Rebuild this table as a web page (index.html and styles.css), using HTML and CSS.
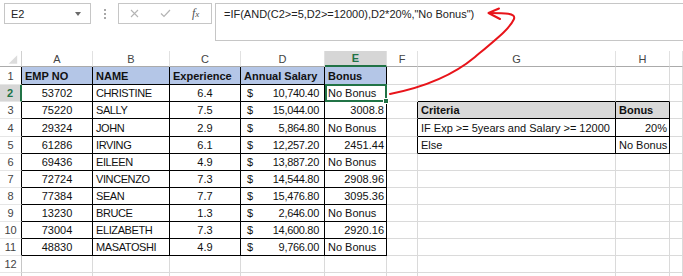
FILE: index.html
```html
<!DOCTYPE html>
<html>
<head>
<meta charset="utf-8">
<link rel="stylesheet" href="styles.css">
</head>
<body>
<div class="bar">
  <div class="namebox"><span>E2</span><span class="tri"></span></div>
  <div class="sep"></div>
  <div class="fxbox">
    <span class="btn"><svg width="9" height="9" viewBox="0 0 9 9"><path d="M1 1L8 8M8 1L1 8" stroke="#b4b4b4" stroke-width="1.1" fill="none"/></svg></span>
    <span class="btn"><svg width="11" height="9" viewBox="0 0 11 9"><path d="M1 4.5L4 7.5L10 1" stroke="#b4b4b4" stroke-width="1.2" fill="none"/></svg></span>
    <span class="btn fx">f<span class="fxs">x</span></span>
  </div>
  <div class="formula">=IF(AND(C2&gt;=5,D2&gt;=12000),D2*20%,"No Bonus")</div>
</div>

<div class="sheet">
  <div class="c corner"><svg width="22" height="16" viewBox="0 0 22 16"><polygon points="18,4 18,13 9,13" fill="#dcdcdc"/></svg></div>
  <div class="c ch">A</div><div class="c ch">B</div><div class="c ch">C</div><div class="c ch">D</div><div class="c ch selc">E</div><div class="c ch">F</div><div class="c ch">G</div><div class="c ch">H</div><div class="c ch"></div>

  <div class="c rh tbl">1</div>
  <div class="c tb hd">EMP NO</div><div class="c tb hd">NAME</div><div class="c tb hd">Experience</div><div class="c tb hd">Annual Salary</div><div class="c tb hd">Bonus</div>
  <div class="c"></div><div class="c"></div><div class="c"></div><div class="c"></div>

  <div class="c rh tbl selr">2</div>
  <div class="c tb ctr">53702</div><div class="c tb nm">CHRISTINE</div><div class="c tb ctr">6.4</div><div class="c tb acc"><span>$</span><span>10,740.40</span></div><div class="c tb sel">No Bonus<span class="handle"></span></div>
  <div class="c"></div><div class="c bb"></div><div class="c bb"></div><div class="c"></div>

  <div class="c rh tbl">3</div>
  <div class="c tb ctr">75220</div><div class="c tb nm">SALLY</div><div class="c tb ctr">7.5</div><div class="c tb acc"><span>$</span><span>15,044.00</span></div><div class="c tb r">3008.8</div>
  <div class="c br"></div><div class="c tb cr">Criteria</div><div class="c tb cr">Bonus</div><div class="c"></div>

  <div class="c rh tbl">4</div>
  <div class="c tb ctr">29324</div><div class="c tb nm">JOHN</div><div class="c tb ctr">2.9</div><div class="c tb acc"><span>$</span><span>5,864.80</span></div><div class="c tb">No Bonus</div>
  <div class="c br"></div><div class="c tb">IF Exp &gt;= 5years and Salary &gt;= 12000</div><div class="c tb r">20%</div><div class="c"></div>

  <div class="c rh tbl">5</div>
  <div class="c tb ctr">61286</div><div class="c tb nm">IRVING</div><div class="c tb ctr">6.1</div><div class="c tb acc"><span>$</span><span>12,257.20</span></div><div class="c tb r">2451.44</div>
  <div class="c br"></div><div class="c tb">Else</div><div class="c tb">No Bonus</div><div class="c"></div>

  <div class="c rh tbl">6</div>
  <div class="c tb ctr">69436</div><div class="c tb nm">EILEEN</div><div class="c tb ctr">4.9</div><div class="c tb acc"><span>$</span><span>13,887.20</span></div><div class="c tb">No Bonus</div>
  <div class="c"></div><div class="c"></div><div class="c"></div><div class="c"></div>

  <div class="c rh tbl">7</div>
  <div class="c tb ctr">72724</div><div class="c tb nm">VINCENZO</div><div class="c tb ctr">7.3</div><div class="c tb acc"><span>$</span><span>14,544.80</span></div><div class="c tb r">2908.96</div>
  <div class="c"></div><div class="c"></div><div class="c"></div><div class="c"></div>

  <div class="c rh tbl">8</div>
  <div class="c tb ctr">77384</div><div class="c tb nm">SEAN</div><div class="c tb ctr">7.7</div><div class="c tb acc"><span>$</span><span>15,476.80</span></div><div class="c tb r">3095.36</div>
  <div class="c"></div><div class="c"></div><div class="c"></div><div class="c"></div>

  <div class="c rh tbl">9</div>
  <div class="c tb ctr">13230</div><div class="c tb nm">BRUCE</div><div class="c tb ctr">1.3</div><div class="c tb acc"><span>$</span><span>2,646.00</span></div><div class="c tb">No Bonus</div>
  <div class="c"></div><div class="c"></div><div class="c"></div><div class="c"></div>

  <div class="c rh tbl">10</div>
  <div class="c tb ctr">73004</div><div class="c tb nm">ELIZABETH</div><div class="c tb ctr">7.3</div><div class="c tb acc"><span>$</span><span>14,600.80</span></div><div class="c tb r">2920.16</div>
  <div class="c"></div><div class="c"></div><div class="c"></div><div class="c"></div>

  <div class="c rh tbl">11</div>
  <div class="c tb ctr">48830</div><div class="c tb nm">MASATOSHI</div><div class="c tb ctr">4.9</div><div class="c tb acc"><span>$</span><span>9,766.00</span></div><div class="c tb">No Bonus</div>
  <div class="c"></div><div class="c"></div><div class="c"></div><div class="c"></div>

  <div class="c rh">12</div>
  <div class="c"></div><div class="c"></div><div class="c"></div><div class="c"></div><div class="c"></div><div class="c"></div><div class="c"></div><div class="c"></div><div class="c"></div>

  <div class="c rh last"></div>
  <div class="c last"></div><div class="c last"></div><div class="c last"></div><div class="c last"></div><div class="c last"></div><div class="c last"></div><div class="c last"></div><div class="c last"></div><div class="c last"></div>
</div>

<svg class="arrow" width="683" height="276" viewBox="0 0 683 276">
  <path d="M390 94 C 420 88, 450 78, 475 57 S 510 28, 514 19 C 516 13, 505 13, 489 13" stroke="#e8141a" stroke-width="2" fill="none" stroke-linecap="round"/>
  <path d="M499 8.5 L488.5 13 L500 19" stroke="#e8141a" stroke-width="2" fill="none" stroke-linecap="round" stroke-linejoin="round"/>
</svg>
</body>
</html>
```

FILE: styles.css
```css
html, body {
  margin: 0;
  padding: 0;
}
body {
  width: 683px;
  height: 276px;
  overflow: hidden;
  position: relative;
  background: #fff;
  font-family: "Liberation Sans", Arial, sans-serif;
  color: #111;
}

/* formula bar */
.bar {
  display: flex;
  align-items: flex-start;
  height: 41px;
  padding-top: 3px;
  box-sizing: border-box;
}
.namebox {
  margin-left: 4px;
  width: 87px;
  height: 21px;
  box-sizing: border-box;
  border: 1px solid #c6c6c6;
  display: flex;
  align-items: center;
  justify-content: space-between;
  padding: 0 9px 0 6px;
  font-size: 11px;
  color: #222;
}
.tri {
  width: 0;
  height: 0;
  border-left: 3px solid transparent;
  border-right: 3px solid transparent;
  border-top: 4px solid #6a6a6a;
}
.sep {
  margin-left: 13px;
  margin-top: 6px;
  width: 2px;
  height: 10px;
  background: repeating-linear-gradient(to bottom, #a8a8a8 0 2px, transparent 2px 4px);
}
.fxbox {
  margin-left: 12px;
  width: 94px;
  height: 21px;
  box-sizing: border-box;
  border: 1px solid #c6c6c6;
  display: flex;
  align-items: center;
}
.btn {
  flex: 1;
  display: flex;
  justify-content: center;
  align-items: center;
}
.fx {
  font-family: "Liberation Serif", serif;
  font-style: italic;
  font-size: 12px;
  color: #505050;
  align-items: baseline;
}
.fxs {
  font-size: 9px;
}
.formula {
  margin-left: 3px;
  flex: 1;
  height: 38px;
  box-sizing: border-box;
  border: 1px solid #c6c6c6;
  border-right: none;
  padding: 4px 0 0 8px;
  font-size: 11px;
  line-height: 13px;
  color: #222;
  white-space: nowrap;
}

/* sheet */
.sheet {
  margin-top: 10px;
  display: grid;
  grid-template-columns: 22px 71px 77px 71px 84px 62px 31px 198px 54px 13px;
  grid-template-rows: 16px 18px 17px 17px 18px 17px 17px 17px 17px 17px 17px 17px 17px 3px;
}
.c {
  box-sizing: border-box;
  border-right: 1px solid #dadada;
  border-bottom: 1px solid #dadada;
  display: flex;
  align-items: center;
  padding: 0 3px;
  font-size: 11px;
  white-space: nowrap;
  overflow: hidden;
  min-width: 0;
}
.c.last {
  border-bottom: none;
}
.corner {
  padding: 0;
  border-right: 1px solid #d0d0d0;
  border-bottom: 1px solid #ababab;
}
.ch {
  justify-content: center;
  color: #444;
  border-right-color: #e1e1e1;
  border-bottom-color: #ababab;
}
.selc {
  background: #d6d6d6;
  color: #217346;
  font-weight: bold;
  border-bottom: 2px solid #217346;
}
.rh {
  justify-content: center;
  padding: 0;
  color: #444;
  border-right-color: #c6c6c6;
  border-bottom-color: #e6e6e6;
}
.rh.tbl {
  border-right-color: #000;
}
.rh.selr {
  background: #d6d6d6;
  color: #217346;
  font-weight: bold;
  border-right: 2px solid #217346;
}
.tb {
  border-right-color: #000;
  border-bottom-color: #000;
}
.hd {
  background: #b4c6e7;
  font-weight: bold;
}
.ctr {
  justify-content: center;
}
.nm {
  letter-spacing: -0.4px;
}
.acc {
  justify-content: space-between;
  padding: 0 5px 0 6px;
  letter-spacing: -0.3px;
}
.r {
  justify-content: flex-end;
  padding-right: 2px;
}
.bb {
  border-bottom-color: #000;
}
.br {
  border-right-color: #000;
}
.cr {
  background: #d9d9d9;
  font-weight: bold;
}
.sel {
  position: relative;
  overflow: visible;
}
.sel::after {
  content: "";
  position: absolute;
  left: 0;
  top: -1px;
  right: -1px;
  bottom: -1px;
  border: 2px solid #217346;
  z-index: 2;
}
.handle {
  position: absolute;
  left: 58px;
  top: 13px;
  width: 4px;
  height: 4px;
  background: #217346;
  border: 1px solid #fff;
  z-index: 3;
}
.arrow {
  position: absolute;
  left: 0;
  top: 0;
  z-index: 5;
  pointer-events: none;
}
```
